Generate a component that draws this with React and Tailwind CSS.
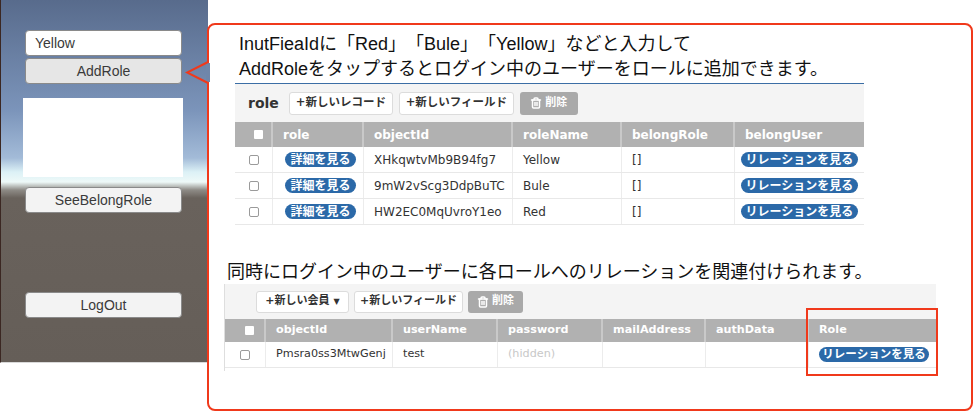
import { Trash2 } from 'lucide-react';

const JP = "font-['Liberation_Sans','Noto_Sans_CJK_JP',sans-serif] [text-spacing-trim:space-all]";
const TB = "font-['DejaVu_Sans','Noto_Sans_CJK_JP',sans-serif]";

const ROLES = [
  { id: 'XHkqwtvMb9B94fg7', name: 'Yellow' },
  { id: '9mW2vScg3DdpBuTC', name: 'Bule' },
  { id: 'HW2EC0MqUvroY1eo', name: 'Red' },
];

function UnityButton({ label, className = '' }) {
  return (
    <div
      className={`w-[157px] h-[26px] rounded-[4px] border border-[#8a8a8a] flex items-center justify-center text-[14px] text-[#3a3a3a] font-['Liberation_Sans',sans-serif] ${className}`}
    >
      {label}
    </div>
  );
}

function LeftPanel() {
  return (
    <div className="shrink-0 w-[208px] h-[363px] border-l border-b border-l-[#3b2722] border-b-[#d9d9d9] pl-[24px] flex flex-col bg-[linear-gradient(180deg,#586b8c_0px,#7b94ba_110px,#a3bbd8_158px,#dcf1f6_172px,#eef9f8_182px,#8e8b86_190px,#69625c_198px,#655e58_100%)]">
      <div className="mt-[30px] w-[157px] h-[26px] rounded-[4px] border border-[#8a8a8a] bg-white flex items-center pl-[9px] text-[14px] text-[#3a3a3a] font-['Liberation_Sans',sans-serif]">
        Yellow
      </div>
      <UnityButton label="AddRole" className="mt-[2px] bg-[#e6e6e6]" />
      <div className="mt-[14px] -ml-[2px] w-[160px] h-[79px] bg-white" />
      <UnityButton label="SeeBelongRole" className="mt-[10px] bg-[#f3f3f3]" />
      <UnityButton label="LogOut" className="mt-[79px] bg-[#f3f3f3]" />
    </div>
  );
}

function ToolButton({ children, w, size = 'text-[11.5px]' }) {
  return (
    <div
      className={`${w} h-full rounded-[3px] border border-[#dcdcdc] bg-white flex items-center justify-center ${size} font-bold text-[#333]`}
    >
      {children}
    </div>
  );
}

function DeleteButton({ w }) {
  return (
    <div className={`${w} h-full rounded-[3px] bg-[#a9a9a9] flex items-center justify-center gap-[3px] text-[11px] font-bold text-white`}>
      <Trash2 size={12} strokeWidth={3} />
      削除
    </div>
  );
}

function HeadCheck() {
  return <div className="w-[9px] h-[9px] bg-white rounded-[1px]" />;
}

function RowCheck() {
  return <div className="w-[10px] h-[10px] bg-white rounded-[2px] border border-[#9a9a9a]" />;
}

function Pill({ label, w, size = 'text-[12px]' }) {
  return (
    <div className={`${w} h-[15px] rounded-full bg-[#2b69a8] flex items-center justify-center ${size} font-bold text-white leading-none`}>
      {label}
    </div>
  );
}

function RoleTable() {
  const cols = 'grid grid-cols-[38px_91px_149px_109px_113px_129px]';
  const head = 'border-r-2 border-[#c9c9c9] pl-[10px] flex items-center';
  const cell = 'border-r border-[#ececec] flex items-center';
  return (
    <div className={`ml-[26px] mt-px w-[629px] border-t border-[#3b6ea5] ${TB}`}>
      <div className="h-[38px] bg-[#f4f4f4] flex items-center pl-[13px]">
        <span className="text-[14px] font-bold text-[#333] mr-[10px]">role</span>
        <div className="h-[23px] flex gap-[6px]">
          <ToolButton w="w-[104px]">+新しいレコード</ToolButton>
          <ToolButton w="w-[115px]">+新しいフィールド</ToolButton>
          <DeleteButton w="w-[58px]" />
        </div>
      </div>
      <div className={`${cols} h-[25px] bg-[#b1b1b1] text-[12px] font-bold text-white`}>
        <div className={`${head} justify-center pl-0`}><HeadCheck /></div>
        <div className={head}>role</div>
        <div className={head}>objectId</div>
        <div className={head}>roleName</div>
        <div className={head}>belongRole</div>
        <div className="pl-[10px] flex items-center">belongUser</div>
      </div>
      {ROLES.map((r) => (
        <div key={r.id} className={`${cols} h-[26px] border-b border-[#e8e8e8] text-[12px] text-[#333]`}>
          <div className={`${cell} justify-center`}><RowCheck /></div>
          <div className={`${cell} pl-[12px]`}><Pill label="詳細を見る" w="w-[71px]" /></div>
          <div className={`${cell} pl-[10px]`}>{r.id}</div>
          <div className={`${cell} pl-[10px]`}>{r.name}</div>
          <div className={`${cell} pl-[10px]`}>[]</div>
          <div className="flex items-center pl-[6px]"><Pill label="リレーションを見る" w="w-[117px]" /></div>
        </div>
      ))}
    </div>
  );
}

function UserTable() {
  const cols = 'grid grid-cols-[41px_127px_105px_105px_103px_103px_128px]';
  const head = 'border-r-2 border-[#c9c9c9] pl-[10px] flex items-center';
  const cell = 'border-r border-[#ececec] flex items-center pl-[10px]';
  return (
    <div className={`relative ml-[15px] w-[712px] h-[87px] border-l border-[#dedede] ${TB}`}>
      <div className="h-[35px] bg-[#f4f4f4] flex items-center pl-[31px]">
        <div className="h-[22px] flex gap-[5px]">
          <ToolButton w="w-[93px]" size="text-[11px]">
            +新しい会員<span className="ml-[4px] text-[8px]">▼</span>
          </ToolButton>
          <ToolButton w="w-[109px]" size="text-[11px]">+新しいフィールド</ToolButton>
          <DeleteButton w="w-[55px]" />
        </div>
      </div>
      <div className={`${cols} h-[23px] bg-[#b1b1b1] text-[11.2px] font-bold text-white`}>
        <div className={`${head} justify-center pl-0`}><HeadCheck /></div>
        <div className={head}>objectId</div>
        <div className={head}>userName</div>
        <div className={head}>password</div>
        <div className={head}>mailAddress</div>
        <div className={head}>authData</div>
        <div className="pl-[10px] flex items-center">Role</div>
      </div>
      <div className={`${cols} h-[26px] border-b border-[#e8e8e8] text-[11.2px] text-[#333]`}>
        <div className="border-r border-[#ececec] flex items-center justify-center"><RowCheck /></div>
        <div className={cell}>Pmsra0ss3MtwGenj</div>
        <div className={cell}>test</div>
        <div className={`${cell} text-[#c8c8c8]`}>(hidden)</div>
        <div className={cell} />
        <div className={cell} />
        <div className="flex items-center pl-[10px]"><Pill label="リレーションを見る" w="w-[110px]" size="text-[11.5px]" /></div>
      </div>
      {/* highlight around Role column */}
      <div className="absolute left-[581px] top-[24px] w-[132px] h-[68px] border-2 border-[#f0391b]" />
    </div>
  );
}

function Callout() {
  return (
    <div className="shrink-0 -ml-px mt-[23px] w-[766px] h-[388px] rounded-[8px] border-2 border-[#f0391b] bg-white flex flex-col">
      <div className={`pl-[30px] pt-[7px] text-[18px] leading-[25px] text-[#111] ${JP}`}>
        <div>InutFieaIdに「Red」「Bule」「Yellow」などと入力して</div>
        <div>AddRoleをタップするとログイン中のユーザーをロールに追加できます。</div>
      </div>
      <RoleTable />
      <div className={`pl-[18px] mt-[35px] text-[18px] leading-[24px] text-[#111] ${JP}`}>
        同時にログイン中のユーザーに各ロールへのリレーションを関連付けられます。
      </div>
      <UserTable />
    </div>
  );
}

export default function App() {
  return (
    <div className="relative w-[975px] h-[413px] bg-white flex items-start overflow-hidden">
      <LeftPanel />
      <Callout />
      <svg className="absolute left-[185px] top-[60px]" width="26" height="26" viewBox="0 0 26 26">
        <rect x="21" y="3" width="4" height="19" fill="#6f86aa" />
        <polyline points="23,2 2,12.5 23,23" fill="none" stroke="#f0391b" strokeWidth="2" />
      </svg>
    </div>
  );
}
